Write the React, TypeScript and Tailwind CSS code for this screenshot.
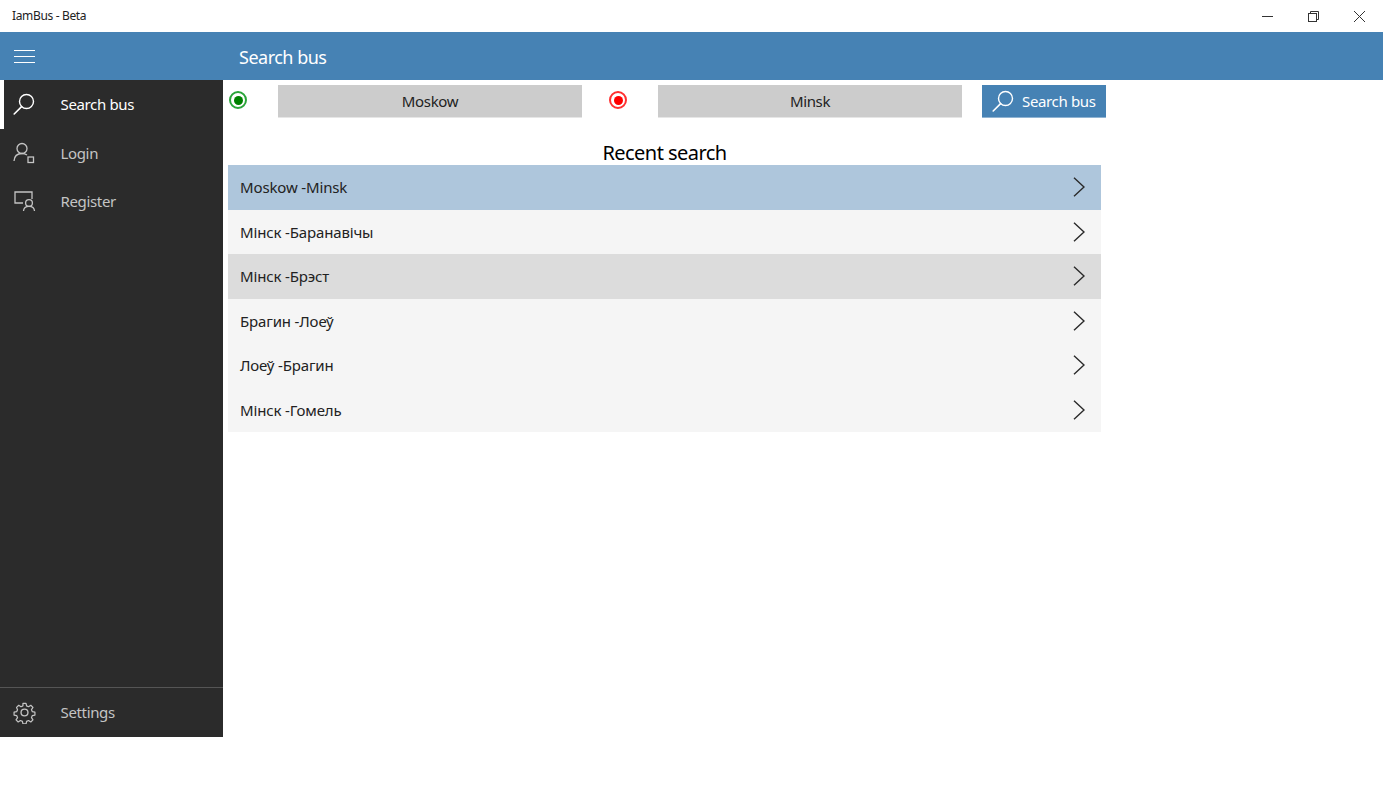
import React from 'react';

const font = { fontFamily: '"Noto Sans", "Open Sans", sans-serif' };

const SearchIcon = ({ className }: { className?: string }) => (
  <svg viewBox="0 0 22 22" className={className} fill="none" stroke="currentColor" strokeWidth="1.4">
    <circle cx="13.5" cy="8.5" r="7" />
    <path d="M8.6 13.6 1.2 21" strokeLinecap="round" strokeWidth="1.6" />
  </svg>
);

const LoginIcon = () => (
  <svg viewBox="0 0 22 22" className="w-[22px] h-[22px]" fill="none" stroke="currentColor" strokeWidth="1.3">
    <circle cx="9" cy="6.5" r="5" />
    <path d="M1 19c.3-4.6 3.4-7.5 8-7.5 2 0 3.7.6 5 1.6" />
    <rect x="15" y="15" width="5.5" height="5.5" />
  </svg>
);

const RegisterIcon = () => (
  <svg viewBox="0 0 22 22" className="w-[22px] h-[22px]" fill="none" stroke="currentColor" strokeWidth="1.3">
    <path d="M9 13H1V2h17v7" />
    <circle cx="15" cy="13" r="3.4" />
    <path d="M9.5 21c.2-2.9 2.4-4.6 5.5-4.6s5.3 1.7 5.5 4.6" />
  </svg>
);

const SettingsIcon = () => (
  <svg viewBox="0 0 24 24" className="w-[23px] h-[23px]" fill="none" stroke="currentColor" strokeWidth="1.4" strokeLinejoin="round">
    <circle cx="12" cy="12" r="3.6" />
    <path d="M10.2 1.5h3.6l.6 3 2.3 1 2.6-1.7 2.5 2.5-1.7 2.6 1 2.3 3 .6v3.4l-3 .6-1 2.3 1.7 2.6-2.5 2.5-2.6-1.7-2.3 1-.6 3h-3.6l-.6-3-2.3-1-2.6 1.7-2.5-2.5 1.7-2.6-1-2.3-3-.6v-3.4l3-.6 1-2.3L2.8 6.3l2.5-2.5 2.6 1.7 2.3-1z" transform="translate(12 12) scale(.9) translate(-12 -12.2)" />
  </svg>
);

const Chevron = () => (
  <svg viewBox="0 0 12 20" className="w-3 h-5 text-[#2a2a2a]" fill="none" stroke="currentColor" strokeWidth="1.4">
    <path d="M1 .7 11 10 1 19.3" />
  </svg>
);

const Radio = ({ className }: { className: string }) => (
  <div className={`w-[18px] h-[18px] rounded-full border-2 flex items-center justify-center bg-white ${className}`}>
    <div className="w-[9px] h-[9px] rounded-full bg-current" />
  </div>
);

const navItems = [
  { label: 'Search bus', icon: <SearchIcon className="w-[22px] h-[22px]" />, active: true, iconPad: 'pl-[9px]' },
  { label: 'Login', icon: <LoginIcon />, active: false, iconPad: 'pl-[9px]' },
  { label: 'Register', icon: <RegisterIcon />, active: false, iconPad: 'pl-[10px]' },
];

const recent = [
  { route: 'Moskow -Minsk', bg: 'bg-[#aec6dc]' },
  { route: 'Мінск -Баранавічы', bg: 'bg-[#f5f5f5]' },
  { route: 'Мінск -Брэст', bg: 'bg-[#dcdcdc]' },
  { route: 'Брагин -Лоеў', bg: 'bg-[#f5f5f5]' },
  { route: 'Лоеў -Брагин', bg: 'bg-[#f5f5f5]' },
  { route: 'Мінск -Гомель', bg: 'bg-[#f5f5f5]' },
];

export default function App() {
  return (
    <div className="w-[1383px] h-[810px] bg-white flex flex-col overflow-hidden" style={font}>
      {/* title bar */}
      <div className="h-8 flex items-center justify-between text-[#222]">
        <span className="pl-3 text-xs tracking-[-0.35px]">IamBus - Beta</span>
        <div className="flex pr-px">
          <div className="w-[46px] h-8 flex items-center justify-center">
            <div className="w-[11px] h-px bg-[#333]" />
          </div>
          <div className="w-[46px] h-8 flex items-center justify-center">
            <svg viewBox="0 0 11 11" className="w-[11px] h-[11px]" fill="none" stroke="#333">
              <rect x="0.5" y="2.5" width="8" height="8" />
              <path d="M2.5 2.5v-2h8v8h-2" />
            </svg>
          </div>
          <div className="w-[46px] h-8 flex items-center justify-center">
            <svg viewBox="0 0 11 11" className="w-[11px] h-[11px]" fill="none" stroke="#333">
              <path d="M0 0 11 11M11 0 0 11" />
            </svg>
          </div>
        </div>
      </div>

      {/* header */}
      <div className="h-12 bg-[#4682b4] flex items-center text-white">
        <div className="w-[48px] flex justify-center">
          <div className="w-[21px] flex flex-col gap-[5px]">
            <div className="h-px bg-white" />
            <div className="h-px bg-white" />
            <div className="h-px bg-white" />
          </div>
        </div>
        <span className="pl-[191px] pt-0.5 text-[18px] tracking-[-0.5px]">Search bus</span>
      </div>

      <div className="flex items-start">
        {/* side menu */}
        <div className="w-[223px] h-[657px] bg-[#2b2b2b] flex flex-col justify-between">
          <div>
            {navItems.map((item) => (
              <div
                key={item.label}
                className={`h-[48.5px] flex items-center border-l-4 ${item.active ? 'border-white text-white' : 'border-transparent text-[#c4c4c4]'}`}
              >
                <div className={`w-[44px] shrink-0 ${item.iconPad}`}>{item.icon}</div>
                <span className="pl-[12.5px] text-[15px] tracking-[-0.35px]">{item.label}</span>
              </div>
            ))}
          </div>
          <div className="h-[50px] border-t border-[#555] flex items-center text-[#c4c4c4]">
            <div className="w-[48px] pl-[13px] shrink-0">
              <SettingsIcon />
            </div>
            <span className="pl-[12.5px] text-[15px] tracking-[-0.35px]">Settings</span>
          </div>
        </div>

        {/* content */}
        <div className="pl-[5px] pt-[5px] w-[883px] shrink-0">
          <div className="flex items-start h-[33px]">
            <Radio className="mt-1.5 ml-px border-[#2aa53a] text-[#008000]" />
            <div className="ml-[31px] w-[304px] h-[33px] bg-[#cccccc] border-b border-[#e6e6e6] flex items-center justify-center text-[15px] tracking-[-0.35px] text-[#222]">
              Moskow
            </div>
            <Radio className="mt-1.5 ml-[27px] border-[#ff3030] text-[#ff0000]" />
            <div className="ml-[31px] w-[304px] h-[33px] bg-[#cccccc] border-b border-[#e6e6e6] flex items-center justify-center text-[15px] tracking-[-0.35px] text-[#222]">
              Minsk
            </div>
            <div className="ml-5 w-[124px] h-[33px] shrink-0 bg-[#4682b4] border-b border-[#8fb3d2] text-white flex items-center pl-2.5 gap-[8px]">
              <SearchIcon className="w-[22px] h-[22px]" />
              <span className="text-[15px] tracking-[-0.35px] whitespace-nowrap">Search bus</span>
            </div>
          </div>

          <div className="w-[873px]">
            <div className="h-[47px] pt-[23px] flex items-center justify-center text-[20px] leading-none tracking-[-0.55px] text-black">
              Recent search
            </div>
            {recent.map((row) => (
              <div key={row.route} className={`h-[44.5px] flex items-center justify-between pl-3 pr-[16px] ${row.bg}`}>
                <span className="text-[15px] tracking-[-0.15px] text-[#222]">{row.route}</span>
                <Chevron />
              </div>
            ))}
          </div>
        </div>
      </div>
    </div>
  );
}
